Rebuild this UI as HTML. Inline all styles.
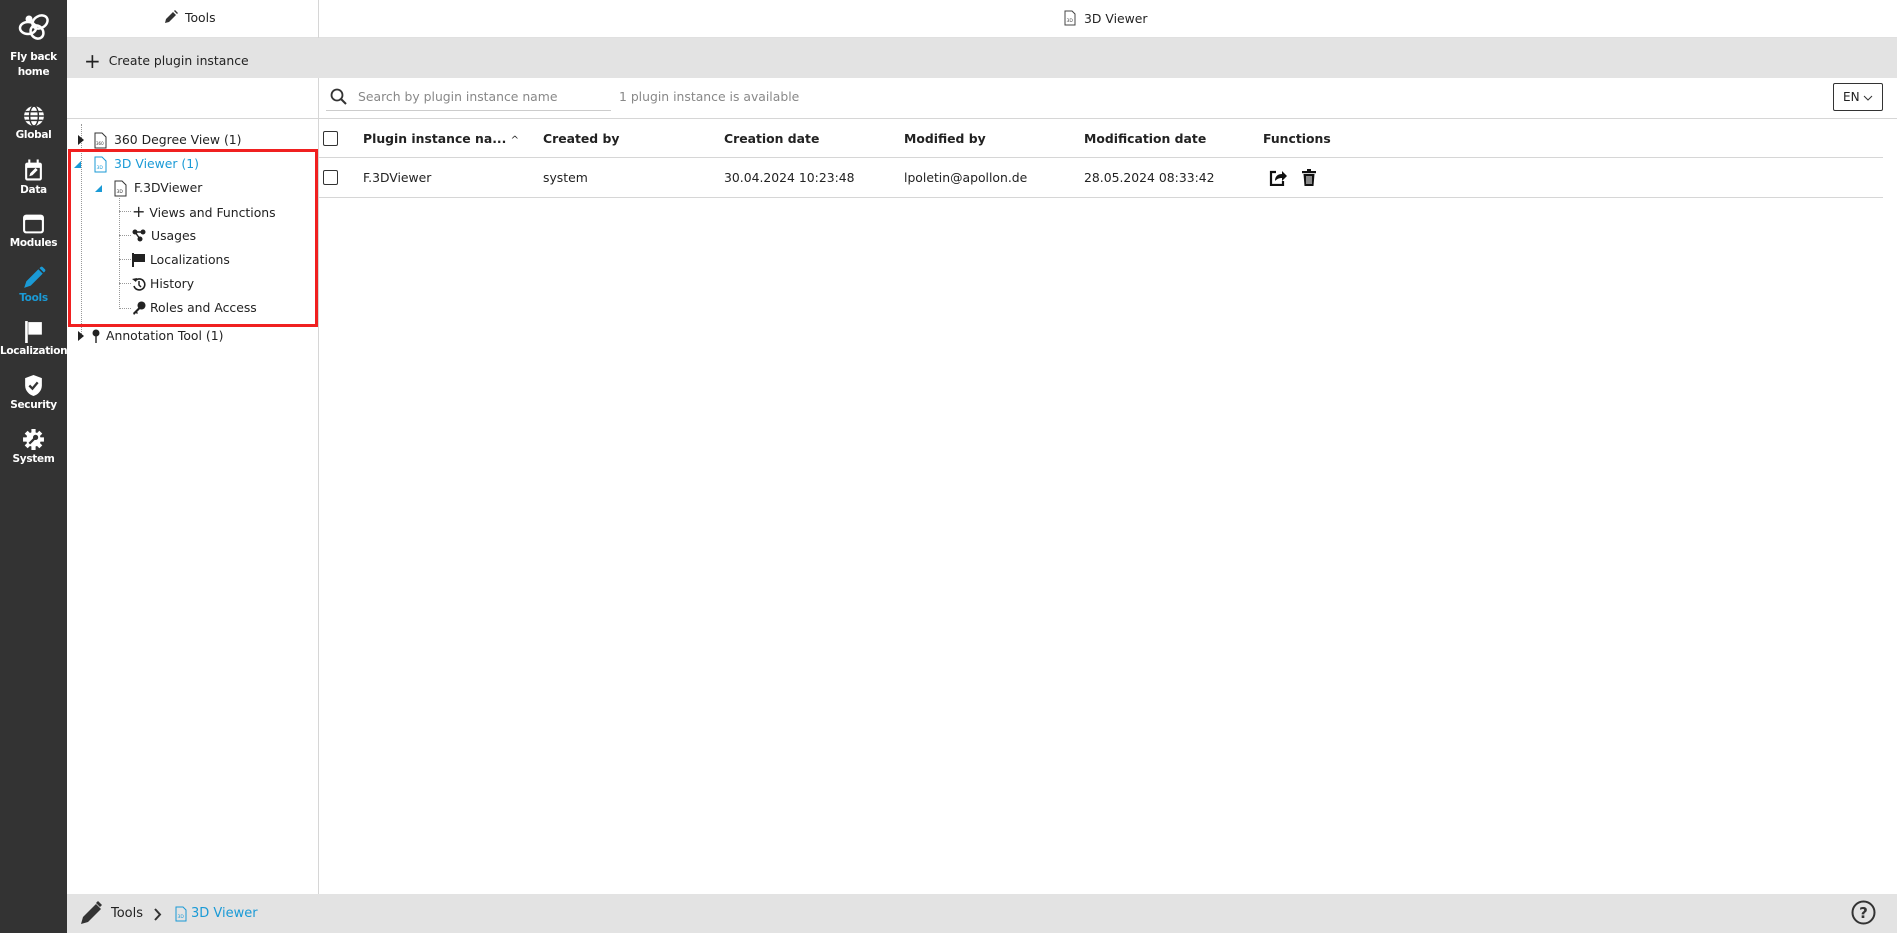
<!DOCTYPE html>
<html><head><meta charset="utf-8"><style>
*{box-sizing:border-box;margin:0;padding:0}
body{width:1897px;height:933px;position:relative;overflow:hidden;background:#fff;font-family:"DejaVu Sans","Liberation Sans",sans-serif;font-size:12.4px;color:#222}
.a{position:absolute;white-space:nowrap}
#side{position:absolute;left:0;top:0;width:67px;height:933px;background:#333}
.si{position:absolute;left:0;width:67px;text-align:center;color:#fff;font-size:10.5px;font-weight:bold;letter-spacing:-0.3px;white-space:nowrap}
.si svg{display:block;margin:0 auto 2px}
.blue{color:#1a9ad6}
.hl{position:absolute;height:1px;background:#d6d6d6}
.cb{position:absolute;width:15px;height:15px;border:1.5px solid #333;border-radius:2px;background:#fff}
.th{font-weight:bold}
.tri{position:absolute;width:0;height:0}
.dot{position:absolute;border-left:1px dotted #999}
.doth{position:absolute;border-top:1px dotted #999}
</style></head><body>
<div id="side">
 <div class="si" style="top:10px">
  <svg width="34" height="32" viewBox="0 0 34 32"><g fill="none" stroke="#fff" stroke-width="2.5"><ellipse cx="11" cy="18" rx="8" ry="6"/><ellipse cx="23" cy="12" rx="8" ry="6" transform="rotate(-30 23 12)"/><ellipse cx="20" cy="22" rx="6" ry="7" transform="rotate(-40 20 22)"/></g><circle cx="12" cy="9" r="3.5" fill="#fff"/></svg>
  <div style="margin-top:8px;line-height:15px">Fly back<br>home</div></div>
 <div class="si" style="top:105px"><svg width="22" height="22" viewBox="0 0 20 20"><circle cx="10" cy="10" r="9" fill="#fff"/><g stroke="#333" stroke-width="1.3" fill="none"><ellipse cx="10" cy="10" rx="4" ry="9"/><path d="M1 10h18M2 6h16M2 14h16"/></g></svg>Global</div>
 <div class="si" style="top:159px"><svg width="21" height="23" viewBox="0 0 20 21"><rect x="2" y="3" width="16" height="17" rx="2" fill="#fff"/><rect x="4" y="8" width="12" height="10" fill="#333"/><path d="M6 16l1-3 5-5 2 2-5 5z" fill="#fff"/><rect x="5" y="0" width="2" height="5" fill="#fff"/><rect x="13" y="0" width="2" height="5" fill="#fff"/></svg>Data</div>
 <div class="si" style="top:213px"><svg width="23" height="22" viewBox="0 0 22 20"><rect x="1" y="1" width="20" height="18" rx="3" fill="#fff"/><rect x="3" y="6" width="16" height="11" fill="#333" rx="1"/></svg>Modules</div>
 <div class="si" style="top:266px;color:#1a9ad6"><svg width="24" height="24" viewBox="0 0 22 22"><path d="M2 20l2-6 11-11 4 4-11 11z M16 2l4 4 1-1c1-1 0-2 0-2l-2-2s-1-1-2 0z" fill="#1a9ad6"/></svg>Tools</div>
 <div class="si" style="top:320px"><svg width="21" height="23" viewBox="0 0 20 22"><rect x="2" y="1" width="2.5" height="21" fill="#fff"/><path d="M5 2h13v12H5z" fill="#fff"/></svg>Localization</div>
 <div class="si" style="top:374px"><svg width="21" height="23" viewBox="0 0 20 22"><path d="M10 1l8 3v7c0 5-4 9-8 10-4-1-8-5-8-10V4z" fill="#fff"/><path d="M6 11l3 3 5-6" stroke="#333" stroke-width="2.2" fill="none"/></svg>Security</div>
 <div class="si" style="top:428px"><svg width="23" height="23" viewBox="0 0 22 22"><circle cx="11" cy="11" r="7" fill="#fff"/><g stroke="#fff" stroke-width="4"><path d="M11 1v20M1 11h20M4 4l14 14M18 4L4 18"/></g><path d="M7 15l5-5" stroke="#333" stroke-width="2.2"/><circle cx="13" cy="9" r="2.5" fill="#333"/></svg>System</div>
</div>

<div class="a" style="left:67px;top:0;width:1830px;height:38px;border-bottom:1px solid #e0e0e0"></div>
<div class="a" style="left:318px;top:0;width:1px;height:894px;background:#d6d6d6"></div>
<div class="a" style="left:164px;top:10px"><svg width="14" height="14" viewBox="0 0 14 14" style="vertical-align:-2px;margin-right:7px"><path d="M1 13l1-4 7-7 3 3-7 7z M10 1l3 3 1-1-3-3z" fill="#333"/></svg>Tools</div>
<div class="a" style="left:1064px;top:10px"><svg width="12" height="16" viewBox="0 0 12 16" style="vertical-align:-3px;margin-right:8px"><path d="M1 1h7l3 3v11H1z" fill="none" stroke="#444"/><text x="2.5" y="12" font-size="4.5" fill="#444">3D</text></svg>3D Viewer</div>
<div class="a" style="left:67px;top:38px;width:1830px;height:40px;background:#e3e3e3"></div>
<div class="a" style="left:84px;top:49px"><span style="font-size:20px;vertical-align:-3px;margin-right:8px">+</span>Create plugin instance</div>

<svg class="a" style="left:330px;top:88px" width="17" height="17" viewBox="0 0 17 17"><circle cx="7" cy="7" r="5.5" fill="none" stroke="#333" stroke-width="1.8"/><path d="M11 11l5 5" stroke="#333" stroke-width="2"/></svg>
<div class="a" style="left:358px;top:89px;color:#888">Search by plugin instance name</div>
<div class="hl" style="left:326px;top:110px;width:285px;background:#ccc"></div>
<div class="a" style="left:619px;top:89px;color:#888">1 plugin instance is available</div>
<div class="a" style="left:1833px;top:83px;width:50px;height:28px;border:1px solid #333;border-radius:2px;padding:6px 0 0 9px;font-size:12px">EN <svg width="10" height="6" viewBox="0 0 10 6"><path d="M1 1l4 4 4-4" fill="none" stroke="#333"/></svg></div>

<div class="hl" style="left:67px;top:118px;width:1830px"></div>

<div class="cb" style="left:323px;top:131px"></div>
<div class="a th" style="left:363px;top:131px">Plugin instance na... <span style="font-weight:normal;font-size:10px">^</span></div>
<div class="a th" style="left:543px;top:131px">Created by</div>
<div class="a th" style="left:724px;top:131px">Creation date</div>
<div class="a th" style="left:904px;top:131px">Modified by</div>
<div class="a th" style="left:1084px;top:131px">Modification date</div>
<div class="a th" style="left:1263px;top:131px">Functions</div>
<div class="hl" style="left:319px;top:157px;width:1564px"></div>
<div class="cb" style="left:323px;top:170px"></div>
<div class="a" style="left:363px;top:170px">F.3DViewer</div>
<div class="a" style="left:543px;top:170px">system</div>
<div class="a" style="left:724px;top:170px">30.04.2024 10:23:48</div>
<div class="a" style="left:904px;top:170px">lpoletin@apollon.de</div>
<div class="a" style="left:1084px;top:170px">28.05.2024 08:33:42</div>
<svg class="a" style="left:1269px;top:169px" width="18" height="17" viewBox="0 0 18 17"><path d="M7 3H2v13h12v-4" fill="none" stroke="#111" stroke-width="2.2"/><path d="M6 12c0-5 3-7 7-7V2l5 5-5 5V9c-3 0-5 1-7 3z" fill="#111"/></svg>
<svg class="a" style="left:1302px;top:169px" width="14" height="17" viewBox="0 0 14 17"><rect x="0" y="2" width="14" height="2.2" fill="#111"/><rect x="5" y="0" width="4" height="2" fill="#111"/><path d="M1.5 5h11l-1 12h-9z" fill="#111"/><path d="M5 7v8M7 7v8M9 7v8" stroke="#fff" stroke-width="1"/></svg>
<div class="hl" style="left:319px;top:197px;width:1564px"></div>

<div class="dot" style="left:81px;top:124px;height:212px"></div>
<div class="tri" style="left:78px;top:135px;border-left:6px solid #222;border-top:5px solid transparent;border-bottom:5px solid transparent"></div>
<svg class="a" style="left:94px;top:132px" width="13" height="17" viewBox="0 0 13 17"><path d="M1 1h7l4 4v11H1z" fill="#fff" stroke="#333"/><text x="2" y="13" font-size="4" fill="#333">360</text></svg>
<div class="a" style="left:114px;top:132px">360 Degree View (1)</div>

<div class="tri" style="left:74px;top:161px;border-right:7px solid #1a9ad6;border-top:7px solid transparent"></div>
<svg class="a" style="left:94px;top:156px" width="13" height="17" viewBox="0 0 13 17"><path d="M1 1h7l4 4v11H1z" fill="#fff" stroke="#1a9ad6"/><text x="2.5" y="13" font-size="4.5" fill="#1a9ad6">3D</text></svg>
<div class="a blue" style="left:114px;top:156px">3D Viewer (1)</div>

<div class="tri" style="left:95px;top:185px;border-right:7px solid #1a9ad6;border-top:7px solid transparent"></div>
<svg class="a" style="left:114px;top:180px" width="13" height="17" viewBox="0 0 13 17"><path d="M1 1h7l4 4v11H1z" fill="#fff" stroke="#333"/><text x="2.5" y="13" font-size="4.5" fill="#333">3D</text></svg>
<div class="a" style="left:134px;top:180px">F.3DViewer</div>
<div class="dot" style="left:119px;top:198px;height:111px"></div>
<div class="doth" style="left:119px;top:211px;width:12px"></div>
<div class="doth" style="left:119px;top:235px;width:12px"></div>
<div class="doth" style="left:119px;top:259px;width:12px"></div>
<div class="doth" style="left:119px;top:283px;width:12px"></div>
<div class="doth" style="left:119px;top:308px;width:12px"></div>
<div class="a" style="left:132px;top:202px"><span style="font-size:16px;margin-right:4px">+</span>Views and Functions</div>
<svg class="a" style="left:132px;top:229px" width="14" height="13" viewBox="0 0 14 13"><circle cx="3" cy="3" r="2.5" fill="#222"/><circle cx="11" cy="3" r="2.5" fill="#222"/><circle cx="8" cy="10" r="2.5" fill="#222"/><path d="M3 3h8M3 3l5 7" stroke="#222" stroke-width="1.5"/></svg>
<div class="a" style="left:151px;top:228px">Usages</div>
<svg class="a" style="left:132px;top:253px" width="13" height="14" viewBox="0 0 13 14"><rect x="0" y="0" width="2" height="14" fill="#222"/><path d="M2 1h11v8H2z" fill="#222"/></svg>
<div class="a" style="left:150px;top:252px">Localizations</div>
<svg class="a" style="left:132px;top:277px" width="14" height="14" viewBox="0 0 14 14"><path d="M3 4a5.5 5.5 0 1 1 -1 5" fill="none" stroke="#222" stroke-width="1.6"/><path d="M0 2l4 3 1-4z" fill="#222"/><path d="M7 4v4l2 2" fill="none" stroke="#222" stroke-width="1.5"/></svg>
<div class="a" style="left:150px;top:276px">History</div>
<svg class="a" style="left:132px;top:301px" width="14" height="14" viewBox="0 0 14 14"><circle cx="9.5" cy="4.5" r="4" fill="#222"/><path d="M7 6L1 12l1 2 2-2 1 1 1-1-1-1 3-3z" fill="#222"/></svg>
<div class="a" style="left:150px;top:300px">Roles and Access</div>

<div class="a" style="left:68px;top:149px;width:250px;height:178px;border:3px solid #f02020"></div>

<div class="tri" style="left:78px;top:331px;border-left:6px solid #222;border-top:5px solid transparent;border-bottom:5px solid transparent"></div>
<svg class="a" style="left:92px;top:329px" width="8" height="14" viewBox="0 0 8 14"><circle cx="4" cy="4" r="3.5" fill="#222"/><rect x="3.3" y="6" width="1.4" height="8" fill="#222"/></svg>
<div class="a" style="left:106px;top:328px">Annotation Tool (1)</div>

<div class="a" style="left:67px;top:894px;width:1830px;height:39px;background:#e3e3e3"></div>
<svg class="a" style="left:79px;top:900px" width="24" height="26" viewBox="0 0 24 26"><path d="M2 24l2-7 13-13 5 5-13 13z" fill="#333"/><path d="M17 3l2-2 4 4-2 2z" fill="#333"/></svg>
<div class="a" style="left:111px;top:906px;font-size:13px">Tools</div>
<svg class="a" style="left:153px;top:908px" width="9" height="13" viewBox="0 0 9 13"><path d="M2 1l5 5.5L2 12" fill="none" stroke="#333" stroke-width="2"/></svg>
<svg class="a" style="left:175px;top:906px" width="12" height="16" viewBox="0 0 12 16"><path d="M1 1h7l3 3v11H1z" fill="none" stroke="#1a9ad6"/><text x="2.5" y="12" font-size="4.5" fill="#1a9ad6">3D</text></svg>
<div class="a blue" style="left:191px;top:906px;font-size:13px">3D Viewer</div>
<svg class="a" style="left:1851px;top:900px" width="25" height="25" viewBox="0 0 25 25"><circle cx="12.5" cy="12.5" r="11" fill="none" stroke="#333" stroke-width="2"/><text x="12.5" y="18" font-size="15" font-weight="bold" text-anchor="middle" fill="#333" font-family="DejaVu Sans">?</text></svg>
</body></html>
